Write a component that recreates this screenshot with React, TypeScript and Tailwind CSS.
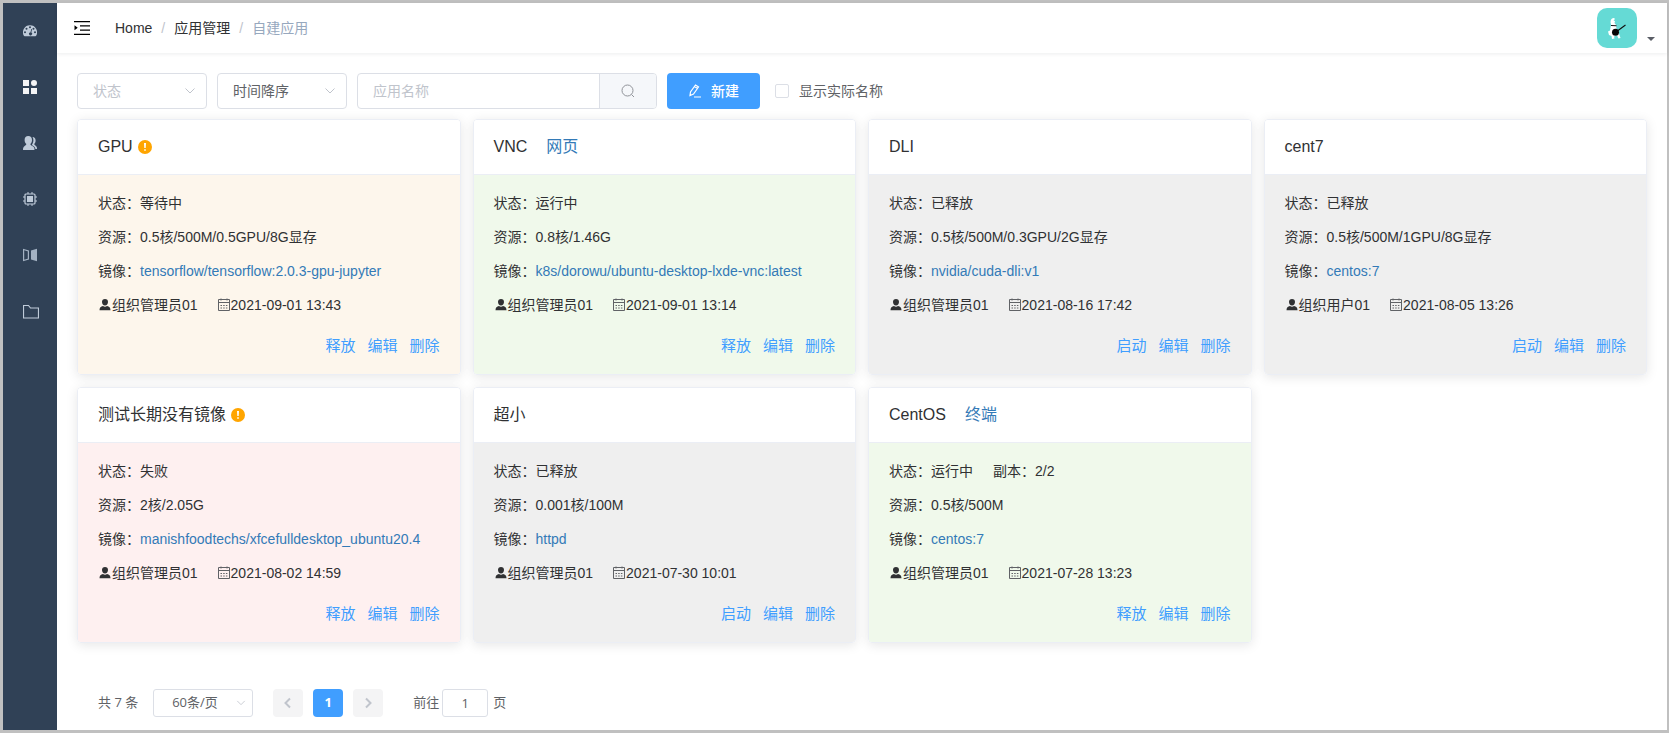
import React from "react";

const STATE_BG = {
  waiting: "bg-[#fdf6ec]",
  running: "bg-[#f0f9eb]",
  released: "bg-[#efefef]",
  failed: "bg-[#fef0f0]",
};

type AppCard = {
  name: string;
  warn?: boolean;
  link?: string;
  state: keyof typeof STATE_BG;
  status: string;
  replicas?: string;
  resource: string;
  image: string;
  user: string;
  time: string;
  toggle: string;
};

const APPS: AppCard[] = [
  { name: "GPU", warn: true, state: "waiting", status: "等待中", resource: "0.5核/500M/0.5GPU/8G显存", image: "tensorflow/tensorflow:2.0.3-gpu-jupyter", user: "组织管理员01", time: "2021-09-01 13:43", toggle: "释放" },
  { name: "VNC", link: "网页", state: "running", status: "运行中", resource: "0.8核/1.46G", image: "k8s/dorowu/ubuntu-desktop-lxde-vnc:latest", user: "组织管理员01", time: "2021-09-01 13:14", toggle: "释放" },
  { name: "DLI", state: "released", status: "已释放", resource: "0.5核/500M/0.3GPU/2G显存", image: "nvidia/cuda-dli:v1", user: "组织管理员01", time: "2021-08-16 17:42", toggle: "启动" },
  { name: "cent7", state: "released", status: "已释放", resource: "0.5核/500M/1GPU/8G显存", image: "centos:7", user: "组织用户01", time: "2021-08-05 13:26", toggle: "启动" },
  { name: "测试长期没有镜像", warn: true, state: "failed", status: "失败", resource: "2核/2.05G", image: "manishfoodtechs/xfcefulldesktop_ubuntu20.4", user: "组织管理员01", time: "2021-08-02 14:59", toggle: "释放" },
  { name: "超小", state: "released", status: "已释放", resource: "0.001核/100M", image: "httpd", user: "组织管理员01", time: "2021-07-30 10:01", toggle: "启动" },
  { name: "CentOS", link: "终端", state: "running", status: "运行中", replicas: "2/2", resource: "0.5核/500M", image: "centos:7", user: "组织管理员01", time: "2021-07-28 13:23", toggle: "释放" },
];

function Chevron({ dir, className }: { dir: "down" | "left" | "right"; className?: string }) {
  const d = { down: "M1.5 3.5 6 8l4.5-4.5", left: "M8 1.5 3.5 6 8 10.5", right: "M4 1.5 8.5 6 4 10.5" }[dir];
  return (
    <svg viewBox="0 0 12 12" className={className} fill="none" stroke="currentColor" aria-hidden="true">
      <path d={d} />
    </svg>
  );
}

const NAV = [
  {
    label: "仪表盘",
    color: "text-[#bfcbd9]",
    icon: (
      <path fillRule="evenodd" d="M7 1.3A7 7 0 0 0 .9 11.8c.2.3.4.4.7.4h10.800c.3 0 .5-.1.7-.4A7 7 0 0 0 7 1.300ZM2 7.300a1 1 0 1 1 0 2 1 1 0 0 1 0-2Zm1.500-3.600a1 1 0 1 1 0 2 1 1 0 0 1 0-2ZM7 2.200a1 1 0 1 1 0 2 1 1 0 0 1 0-2Zm5 5.100a1 1 0 1 1 0 2 1 1 0 0 1 0-2ZM10.500 3.700a1 1 0 1 1 0 2 1 1 0 0 1 0-2ZM8.300 4.900l.8.2-.8 3.500a1.500 1.500 0 1 1-.9-.2l.9-3.500Z" />
    ),
  },
  {
    label: "应用管理",
    color: "text-[#f4f4f5]",
    icon: <path d="M0 0h6v6H0zM0 8h6v6H0zM8 8h6v6H8zM11 0a3 3 0 1 1 0 6 3 3 0 0 1 0-6Z" />,
  },
  {
    label: "用户管理",
    color: "text-[#bfcbd9]",
    icon: (
      <path d="M5.200 0C7.600 0 9 1.600 9 3.900c0 1.700-.6 3.100-1.500 3.900v1c.3.8 3.600 1.400 3.900 3.400l.1 1.800H0l.1-1.800C.4 10.200 2.900 9.600 3.200 8.800v-1C2.200 7 1.600 5.600 1.600 3.900 1.600 1.600 3 0 5.200 0ZM9.500 1c1.900 0 3.100 1.400 3.100 3.400 0 1.500-.5 2.700-1.300 3.400v.8c.3.7 2.400 1.300 2.600 3l.1 1.500h-1.600c-.1-2-1.500-2.900-3.200-3.900-.4-.3-.4-.6 0-1 .8-1 1.200-2.400 1.200-4.100A6 6 0 0 0 9.500 1Z" />
    ),
  },
  {
    label: "资源管理",
    color: "text-[#bfcbd9]",
    icon: (
      <g>
        <rect x="2" y="2" width="10" height="10" rx="1" fill="none" stroke="currentColor" strokeWidth="1.2" />
        <path d="M4 4h6v6H4zM4.500 0h1v2h-1zM8.500 0h1v2h-1zM4.500 12h1v2h-1zM8.500 12h1v2h-1zM0 4.500h2v1H0zM0 8.500h2v1H0zM12 4.500h2v1h-2zM12 8.500h2v1h-2z" />
      </g>
    ),
  },
  {
    label: "镜像管理",
    color: "text-[#a3b1c2]",
    icon: (
      <g>
        <path d="M14 .8v12.400L8 11.500v-9z" />
        <path d="M.6 1.500 5.400 3v8L.6 12.500z" fill="none" stroke="currentColor" strokeWidth="1.200" />
      </g>
    ),
  },
];

function Sidebar() {
  return (
    <nav aria-label="主菜单" className="flex w-[54px] shrink-0 flex-col bg-[#304156]">
      {NAV.map((n) => (
        <a key={n.label} href="#" aria-label={n.label} className={`flex h-14 items-center pl-5 ${n.color}`}>
          <svg viewBox="0 0 14 14" className="h-3.5 w-3.5" fill="currentColor" aria-hidden="true">
            {n.icon}
          </svg>
        </a>
      ))}
      <a href="#" aria-label="文件管理" className="flex h-14 items-center pl-5 text-[#bfcbd9]">
        <svg viewBox="0 0 16 16" className="h-4 w-4" fill="none" stroke="currentColor" strokeWidth="1.2" aria-hidden="true">
          <path d="M.5 2.500h5l2 2.500h8v10H.5z" />
        </svg>
      </a>
    </nav>
  );
}

function Header() {
  return (
    <header className="flex h-[50px] items-center justify-between pr-3 shadow-[0_1px_4px_rgba(0,21,41,0.08)]">
      <div className="flex items-center">
        <button type="button" aria-label="展开菜单" className="ml-[17px] mr-[25px]">
          <svg viewBox="0 0 16 14" className="h-3.5 w-4" aria-hidden="true">
            <path d="M0 0h16v1.300H0zM6 4.200h10v1.300H6zM6 8.400h10v1.300H6zM0 12.700h16V14H0zM.5 4.300v5L3.700 6.800z" />
          </svg>
        </button>
        <nav aria-label="面包屑" className="flex text-sm">
          <a href="#" className="text-[#303133]">Home</a>
          <span className="mx-[9px] text-[#c0c4cc]">/</span>
          <a href="#" className="text-[#303133]">应用管理</a>
          <span className="mx-[9px] text-[#c0c4cc]">/</span>
          <span className="text-[#97a8be]">自建应用</span>
        </nav>
      </div>
      <button type="button" aria-label="用户菜单" className="flex items-end gap-2.5">
        <svg viewBox="0 0 40 40" className="h-10 w-10 rounded-[10px] bg-[#65dad5]" aria-hidden="true">
          <path fill="#fff" d="M13.500 14c0-2.500 1.500-4 3.500-4l1 1-1.500 1.500 1.500.5-.5 2 1.500 2 .5 4 2 1.500.5 3 1.500 4.500-2 .5-1.500-3-3 1 .5 2-2.500.5-.5-3-2.500-1-1-3.500 2-1 .5-3 .5-2.500z" />
          <path fill="none" stroke="#111" strokeWidth="1.100" d="m19 24 9.500-7M14 17.500l5.500 .300" />
          <circle cx="18.500" cy="24.300" r="3.500" fill="#050505" />
        </svg>
        <svg viewBox="0 0 8 4" className="mb-[7px] h-1 w-2" aria-hidden="true">
          <path fill="#5a5e66" d="M0 0h8L4 4z" />
        </svg>
      </button>
    </header>
  );
}

function Select({ label, value, muted }: { label: string; value: string; muted?: boolean }) {
  return (
    <div className="relative w-[130px]">
      <select
        aria-label={label}
        className={`h-9 w-full appearance-none rounded border border-[#dcdfe6] bg-white pl-[15px] pr-8 text-sm ${muted ? "text-[#c0c4cc]" : "text-[#606266]"}`}
      >
        <option>{value}</option>
      </select>
      <Chevron dir="down" className="pointer-events-none absolute right-[11px] top-3 h-3 w-3 text-[#c0c4cc]" />
    </div>
  );
}

function Filters() {
  return (
    <div className="flex items-center gap-2.5">
      <Select label="状态" value="状态" muted />
      <Select label="排序" value="时间降序" />
      <div className="flex h-9 w-[300px] overflow-hidden rounded border border-[#dcdfe6]">
        <input
          aria-label="应用名称"
          placeholder="应用名称"
          className="min-w-0 flex-1 px-[15px] text-sm text-[#606266] placeholder:text-[#c0c4cc]"
        />
        <button type="button" aria-label="搜索" className="flex w-[57px] items-center justify-center border-l border-[#dcdfe6] bg-[#f5f7fa]">
          <svg viewBox="0 0 14 14" className="h-3.5 w-3.5 text-[#909399]" fill="none" stroke="currentColor" aria-hidden="true">
            <circle cx="6.500" cy="6.500" r="5.500" />
            <path d="m10.500 10.500 2.500 2.500" />
          </svg>
        </button>
      </div>
      <button type="button" className="flex h-9 items-center gap-[9px] rounded bg-[#409eff] px-[21px] text-sm font-medium text-white">
        <svg viewBox="0 0 14 14" className="h-3.5 w-3.5" fill="none" stroke="currentColor" strokeWidth="1.200" aria-hidden="true">
          <path d="M2 11.500 2.500 8l5-7 3 2-5 7zM6.500 2.500l3 2M6 13h7" />
        </svg>
        新建
      </button>
      <label className="ml-[5px] flex items-center gap-2.5 text-sm text-[#606266]">
        <input type="checkbox" className="h-3.5 w-3.5 appearance-none rounded-[2px] border border-[#dcdfe6] bg-white" />
        显示实际名称
      </label>
    </div>
  );
}

function Card({ app }: { app: AppCard }) {
  return (
    <article className="overflow-hidden rounded border border-[#ebeef5] text-[#303133] shadow-[0_2px_12px_rgba(0,0,0,0.1)]">
      <header className="flex h-[55px] items-center border-b border-[#ebeef5] bg-white px-5 text-base">
        <h2>{app.name}</h2>
        {app.warn && (
          <svg viewBox="0 0 14 14" className="ml-[5px] h-3.5 w-3.5" role="img" aria-label="警告">
            <circle cx="7" cy="7" r="7" fill="#ffa500" />
            <path fill="#fff" d="M6 3h2l-.3 5H6.300zM6.200 9.200h1.600v1.600H6.200z" />
          </svg>
        )}
        {app.link && <a href="#" className="ml-[19px] text-[#337ab7]">{app.link}</a>}
      </header>
      <div className={`px-5 pb-4 pt-5 text-sm ${STATE_BG[app.state]}`}>
        <div className="flex flex-col gap-[18px] leading-4">
          <p className="flex gap-5">
            <span>状态：{app.status}</span>
            {app.replicas && <span>副本：{app.replicas}</span>}
          </p>
          <p>资源：{app.resource}</p>
          <p>
            镜像：<a href="#" className="text-[#337ab7]">{app.image}</a>
          </p>
          <p className="flex gap-[19px]">
            <span className="flex items-center">
              <svg viewBox="0 0 14 14" className="h-3.5 w-3.5" fill="currentColor" aria-hidden="true">
                <path d="M7 1a3 3 0 0 1 3 3c0 1.900-1.200 3.500-3 3.500S4 5.900 4 4a3 3 0 0 1 3-3ZM1.500 12.200c0-2.700 1.300-3.700 3.500-4.100.6.400 1.300.6 2 .6s1.400-.2 2-.6c2.200.4 3.500 1.400 3.500 4.100z" />
              </svg>
              {app.user}
            </span>
            <span className="flex items-center">
              <svg viewBox="0 0 14 14" className="h-3.5 w-3.5" fill="none" stroke="#606266" aria-hidden="true">
                <path d="M1.500 1.500h11v11h-11zM1.500 4.500h11M4 .500V2.500M10 .500V2.500" />
                <path d="M3.500 7.500h7M3.500 10h7" strokeDasharray="1.500 1.200" />
              </svg>
              {app.time}
            </span>
          </p>
        </div>
        <div className="mt-[21px] flex justify-end gap-3 text-[15px] leading-6 text-[#409eff]">
          <button type="button">{app.toggle}</button>
          <button type="button">编辑</button>
          <button type="button">删除</button>
        </div>
      </div>
    </article>
  );
}

function Pagination() {
  return (
    <footer className="mt-[46px] flex h-7 items-center pl-[21px] font-['Open_Sans','Noto_Sans_CJK_SC',sans-serif] text-[13px] text-[#606266]">
      <span>共 7 条</span>
      <div className="relative ml-[15px] w-[100px]">
        <select aria-label="每页条数" className="h-7 w-full appearance-none rounded-[3px] border border-[#dcdfe6] bg-white pl-[18px] pr-6">
          <option>60条/页</option>
        </select>
        <Chevron dir="down" className="pointer-events-none absolute right-[7px] top-[9px] h-2.5 w-2.5 text-[#c0c4cc]" />
      </div>
      <div className="ml-5 flex gap-2.5">
        <button type="button" disabled aria-label="上一页" className="flex h-7 w-[30px] items-center justify-center rounded-sm bg-[#f4f4f5] text-[#c0c4cc]">
          <Chevron dir="left" className="h-3 w-3 stroke-2" />
        </button>
        <button type="button" aria-current="page" className="h-7 w-[30px] rounded-sm bg-[#409eff] font-bold text-white">1</button>
        <button type="button" disabled aria-label="下一页" className="flex h-7 w-[30px] items-center justify-center rounded-sm bg-[#f4f4f5] text-[#c0c4cc]">
          <Chevron dir="right" className="h-3 w-3 stroke-2" />
        </button>
      </div>
      <label className="ml-[30px] flex items-center gap-[3px]">
        前往
        <input defaultValue="1" className="h-7 w-[46px] rounded-[3px] border border-[#dcdfe6] text-center" />
        <span className="ml-0.5">页</span>
      </label>
    </footer>
  );
}

export default function App() {
  return (
    <div className="flex min-h-screen border-[3px] border-r-2 border-[#c0c0c0] bg-white font-['Liberation_Sans','Noto_Sans_CJK_SC',sans-serif]">
      <Sidebar />
      <div className="min-w-0 flex-1">
        <Header />
        <main className="px-5 pt-5">
          <Filters />
          <section className="mt-2.5 grid grid-cols-4 gap-3">
            {APPS.map((a) => (
              <Card key={a.name} app={a} />
            ))}
          </section>
          <Pagination />
        </main>
      </div>
    </div>
  );
}
